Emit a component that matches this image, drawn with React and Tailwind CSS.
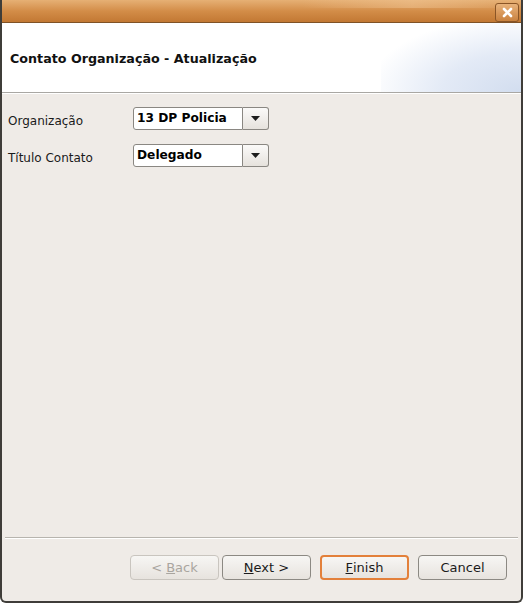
import React from 'react';

const font = { fontFamily: '"DejaVu Sans", "Liberation Sans", sans-serif' };

const Combo = ({ value }) => (
  <div className="flex h-[23px] w-[136px]">
    <div className="flex-1 flex items-center pl-[3px] bg-white border border-[#8a8782] rounded-l-[3px] text-[12.2px] font-bold text-black">
      {value}
    </div>
    <div className="w-[26px] flex items-center justify-center border border-l-0 border-[#8a8782] rounded-r-[3px] bg-gradient-to-b from-[#fbfaf9] to-[#e6e2dd]">
      <svg width="9" height="5" viewBox="0 0 9 5">
        <path d="M0 0 H9 L4.5 5 Z" fill="#1d1d1d" />
      </svg>
    </div>
  </div>
);

const Button = ({ children, disabled, focused }) => (
  <button
    className={
      'w-[89px] h-[25px] flex items-center justify-center rounded-[4px] text-[13px] bg-gradient-to-b from-[#f7f6f4] to-[#e7e3de] ' +
      (disabled
        ? 'border border-[#c9c5bf] text-[#a9a59f]'
        : focused
        ? 'border-2 border-[#e3803a] text-[#1b1b1b]'
        : 'border border-[#8c8983] text-[#1b1b1b]')
    }
  >
    {children}
  </button>
);

export default function App() {
  return (
    <div style={font} className="w-[525px] h-[603px] bg-white">
      <div className="relative w-[523px] h-[603px] flex flex-col bg-[#efebe7] border-l-2 border-r-2 border-b-2 border-[#3f3d39] rounded-b-[6px] overflow-hidden">
        {/* title bar */}
        <div className="relative h-[23px] shrink-0 bg-gradient-to-b from-[#e6b074] via-[#d38d48] to-[#c27833] border-b border-[#7f5226]">
          <div className="absolute left-[300px] top-0 w-[220px] h-[8px] bg-gradient-to-r from-transparent via-[#f0c594]/50 to-transparent" />
          <div className="absolute right-[2px] top-[3px] w-[24px] h-[19px] rounded-[3px] border border-[#8a5526] bg-gradient-to-b from-[#e8b27a] to-[#c9823f] flex items-center justify-center">
            <svg width="11" height="11" viewBox="0 0 11 11">
              <path d="M2 2 L9 9 M9 2 L2 9" stroke="#fff" strokeWidth="2.6" strokeLinecap="round" />
            </svg>
          </div>
        </div>

        {/* header */}
        <div className="relative h-[69px] shrink-0 bg-white flex items-center pl-[8px]">
          <div className="absolute right-0 top-0 h-full w-[140px] bg-[radial-gradient(ellipse_at_100%_100%,#d2ddef_0%,#e3eaf6_40%,rgba(255,255,255,0)_78%)]" />
          <span className="relative text-[12.7px] font-bold text-[#111] pt-[2px]">
            Contato Organização - Atualização
          </span>
        </div>
        <div className="h-[1px] shrink-0 bg-[#a9a7a3]" />
        <div className="h-[1px] shrink-0 bg-white" />

        {/* form */}
        <div className="flex-1 flex flex-col gap-[14px] pt-[13px] pl-[6px]">
          <div className="flex items-center">
            <span className="w-[125px] text-[12px] text-[#1a1a1a] pt-[4px]">Organização</span>
            <Combo value="13 DP Policia" />
          </div>
          <div className="flex items-center">
            <span className="w-[125px] text-[12px] text-[#1a1a1a] pt-[4px]">Título Contato</span>
            <Combo value="Delegado" />
          </div>
        </div>

        {/* footer */}
        <div className="h-[1px] shrink-0 mx-[3px] bg-[#b7b4ae]" />
        <div className="h-[1px] shrink-0 mx-[3px] bg-white" />
        <div className="h-[62px] shrink-0 flex items-start justify-end pt-[16px] pr-[14px]">
          <div className="flex gap-[3px]">
            <Button disabled>
              &lt; <span className="underline ml-[4px]">B</span>ack
            </Button>
            <Button>
              <span className="underline">N</span>ext &gt;
            </Button>
          </div>
          <div className="ml-[9px]">
            <Button focused>
              <span className="underline">F</span>inish
            </Button>
          </div>
          <div className="ml-[9px]">
            <Button>Cancel</Button>
          </div>
        </div>
      </div>
    </div>
  );
}
